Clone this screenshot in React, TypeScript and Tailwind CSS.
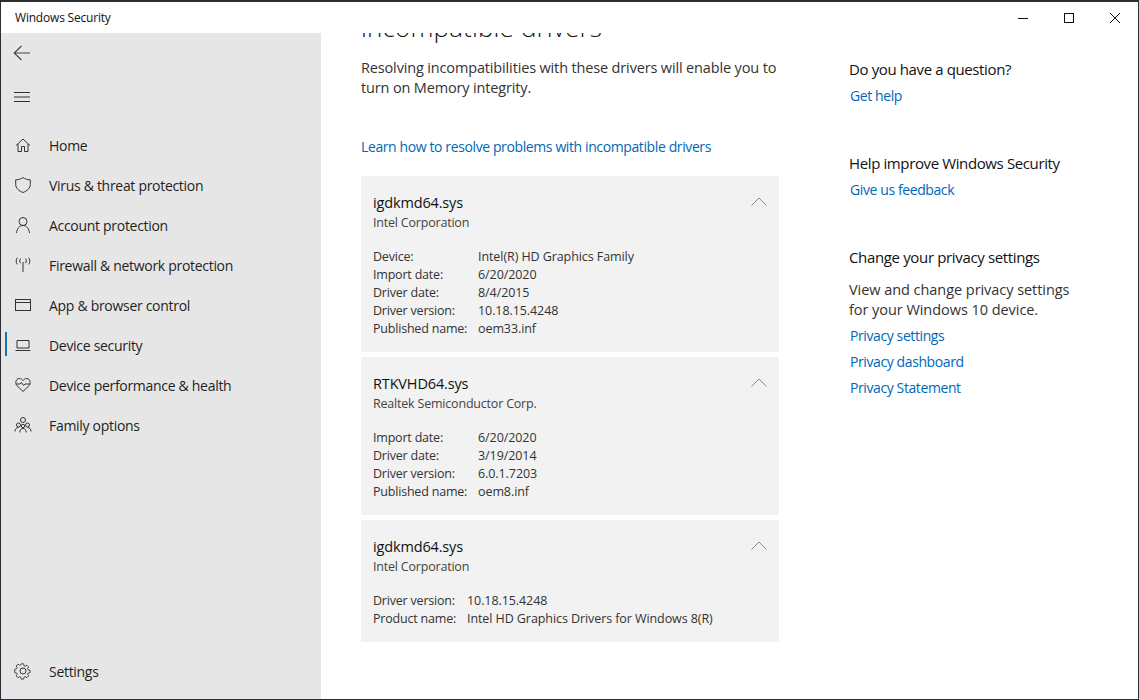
import React from "react";

const font = { fontFamily: '"Open Sans", "Noto Sans", sans-serif' };

const S = (p: { children: React.ReactNode; w?: number; h?: number; vb?: string }) => (
  <svg width={p.w ?? 18} height={p.h ?? 18} viewBox={p.vb ?? "0 0 18 18"} fill="none" stroke="#333" strokeWidth="1" className="shrink-0">
    {p.children}
  </svg>
);

const icons: Record<string, React.ReactNode> = {
  home: <S><path d="M2 9.500 9 3l7 6.500M4 8v7.500h3.500V10.500h3v5H14V8" /></S>,
  shield: <S><path d="M9 1.500c2 1.600 4.700 2.300 7.300 2.300V8.500c0 3.700-3.200 6.500-7.300 8-4.100-1.500-7.300-4.300-7.300-8V3.800C4.300 3.800 7 3.100 9 1.500z" /></S>,
  user: <S><circle cx="9" cy="5.500" r="4" /><path d="M2.500 17c.5-4.500 3-7.500 6.500-7.500s6 3 6.500 7.500" /></S>,
  net: <S><path d="M9 6v10M6.500 2.500c-1 1.500-1 3.200 0 4.700M11.500 2.500c1 1.500 1 3.200 0 4.700M3.300 1.700c-1.500 2-1.500 4.700 0 6.700M14.700 1.700c1.500 2 1.500 4.700 0 6.700" /></S>,
  app: <S w={18} h={14} vb="0 0 18 14"><rect x="1.500" y="1.500" width="15" height="11" /><path d="M1.500 4.500h15" /></S>,
  laptop: <S><path d="M3 4.500h12v7.500H3zM1.500 14.500h15" /></S>,
  heart: <S><path d="M9 15.500 2.800 9.500C.8 7.300 2 2.500 5.200 2.500 7 2.500 8.200 3.500 9 4.500 9.800 3.500 11 2.500 12.800 2.500 16 2.500 17.200 7.300 15.200 9.500z" /><path d="M2 8h4l1.500-1.500 2 3L11 8h5" /></S>,
  family: <S><circle cx="9" cy="4" r="2.500" /><circle cx="4.500" cy="9" r="2" /><circle cx="13.500" cy="9" r="2" /><circle cx="9" cy="10" r="1.700" /><path d="M1 15.500c0-2.500 1.500-4 3.500-4M17 15.500c0-2.500-1.500-4-3.500-4M5.800 16.500c0-2.500 1.200-4 3.200-4s3.200 1.500 3.200 4" /></S>,
  gear: <S><circle cx="9" cy="9" r="3" /><path d="M7.600 1.500h2.800l.4 2.200 1.400.6 1.900-1.200 2 2-1.200 1.900.6 1.400 2.200.4v2.800l-2.200.4-.6 1.400 1.200 1.900-2 2-1.900-1.200-1.400.6-.4 2.200H7.600l-.4-2.200-1.400-.6-1.900 1.200-2-2 1.200-1.900-.6-1.400-2.200-.4V7.600l2.200-.4.6-1.400-1.200-1.900 2-2 1.900 1.200 1.400-.6z" transform="translate(.5 .5) scale(.88)" /></S>,
};

const nav: [string, string, boolean?][] = [
  ["home", "Home"],
  ["shield", "Virus & threat protection"],
  ["user", "Account protection"],
  ["net", "Firewall & network protection"],
  ["app", "App & browser control"],
  ["laptop", "Device security", true],
  ["heart", "Device performance & health"],
  ["family", "Family options"],
];

function NavRow({ icon, label, active }: { icon: string; label: string; active?: boolean }) {
  return (
    <div className="relative flex h-10 items-center pl-[13px] text-[#1f1f1f]">
      {active && <div className="absolute left-[4px] top-[7px] h-[24px] w-[2px] bg-[#1b74b0]" />}
      <span className="flex w-[35px] justify-start">{icons[icon]}</span>
      <span>{label}</span>
    </div>
  );
}

function Card({ title, vendor, rows, labelW, h }: { title: string; vendor: string; rows: [string, string][]; labelW: string; h: string }) {
  return (
    <div className={`relative ${h} bg-[#f2f2f2] px-3 pt-[16px]`}>
      <svg width="16" height="9" viewBox="0 0 16 9" fill="none" stroke="#8a8a8a" className="absolute right-[12px] top-[21px]">
        <path d="M.5 8.500 8 1l7.500 7.500" />
      </svg>
      <div className="text-[14.5px] leading-[22px] tracking-[-0.15px] text-[#111]">{title}</div>
      <div className="text-[12.5px] leading-[18px] tracking-[-0.2px] text-[#444]">{vendor}</div>
      <div className="mt-[16px] text-[12.5px] leading-[18px] text-[#333]">
        {rows.map(([a, b]) => (
          <div key={a} className="flex">
            <span className={`${labelW} tracking-[-0.2px]`}>{a}</span>
            <span className="tracking-[-0.08px]">{b}</span>
          </div>
        ))}
      </div>
    </div>
  );
}

const Link = ({ children }: { children: React.ReactNode }) => (
  <div className="text-[14px] leading-[26px] tracking-[-0.4px] text-[#0067b8]">{children}</div>
);

export default function App() {
  return (
    <div style={font} className="flex h-[700px] w-[1139px] flex-col overflow-hidden border border-t-2 border-[#2b2f33] bg-white">
      <div className="flex h-[31px] shrink-0 items-center justify-between">
        <span className="pl-[14px] text-[12px] tracking-[-0.2px] text-[#111]">Windows Security</span>
        <div className="flex items-center">
          <svg width="46" height="12" viewBox="0 0 46 12" stroke="#111"><path d="M18 6.500h10" /></svg>
          <svg width="46" height="12" viewBox="0 0 46 12" fill="none" stroke="#111"><rect x="18.500" y="1.500" width="9" height="9" /></svg>
          <svg width="46" height="12" viewBox="0 0 46 12" fill="none" stroke="#111"><path d="M18 1l10 10M28 1 18 11" /></svg>
        </div>
      </div>
      <div className="flex min-h-0 flex-1">
        <aside className="flex w-[320px] shrink-0 flex-col bg-[#e6e6e6] text-[14px] tracking-[-0.3px]">
          <div className="flex h-[40px] items-center pl-[12px]">
            <svg width="18" height="16" viewBox="0 0 18 16" fill="none" stroke="#444" strokeWidth="1.100"><path d="M8.500 1 1.200 8l7.300 7M1.200 8H17" /></svg>
          </div>
          <div className="flex h-[48px] items-center pl-[12px]">
            <svg width="18" height="12" viewBox="0 0 18 12" fill="none" stroke="#333"><path d="M1 1.500h16M1 6h16M1 10.500h16" /></svg>
          </div>
          <div className="h-[4px]" />
          {nav.map(([i, l, a]) => (
            <NavRow key={l} icon={i} label={l} active={a} />
          ))}
          <div className="mt-auto mb-[8px]">
            <NavRow icon="gear" label="Settings" />
          </div>
        </aside>
        <main className="flex min-h-0 flex-1">
          <section className="w-[418px] ml-[40px] shrink-0 overflow-hidden">
            <div className="-mt-[20px] text-[26px] font-light leading-[28px] tracking-[0.15px] text-[#111]">incompatible drivers</div>
            <p className="mt-[17px] text-[14.5px] leading-[20px] tracking-[-0.15px] text-[#333]">
              Resolving incompatibilities with these drivers will enable you to
              <br />
              turn on Memory integrity.
            </p>
            <div className="mt-[39px] text-[14px] leading-[20px] tracking-[-0.39px] text-[#0067b8]">Learn how to resolve problems with incompatible drivers</div>
            <div className="mt-[19px] flex flex-col gap-[5px]">
              <Card h="h-[176px]" labelW="w-[105px]" title="igdkmd64.sys" vendor="Intel Corporation" rows={[["Device:", "Intel(R) HD Graphics Family"], ["Import date:", "6/20/2020"], ["Driver date:", "8/4/2015"], ["Driver version:", "10.18.15.4248"], ["Published name:", "oem33.inf"]]} />
              <Card h="h-[158px]" labelW="w-[105px]" title="RTKVHD64.sys" vendor="Realtek Semiconductor Corp." rows={[["Import date:", "6/20/2020"], ["Driver date:", "3/19/2014"], ["Driver version:", "6.0.1.7203"], ["Published name:", "oem8.inf"]]} />
              <Card h="h-[122px]" labelW="w-[94px]" title="igdkmd64.sys" vendor="Intel Corporation" rows={[["Driver version:", "10.18.15.4248"], ["Product name:", "Intel HD Graphics Drivers for Windows 8(R)"]]} />
            </div>
          </section>
          <section className="ml-[70px] w-[260px] pt-[24px]">
            <div className="text-[15px] leading-[24px] tracking-[-0.38px] text-[#111]">Do you have a question?</div>
            <div className="ml-px mt-[2px]"><Link>Get help</Link></div>
            <div className="mt-[42px] text-[15px] leading-[24px] tracking-[-0.38px] text-[#111]">Help improve Windows Security</div>
            <div className="ml-px mt-[2px]"><Link>Give us feedback</Link></div>
            <div className="mt-[42px] text-[15px] leading-[24px] tracking-[-0.35px] text-[#111]">Change your privacy settings</div>
            <p className="mt-[11px] text-[14.5px] leading-[20px] tracking-[-0.05px] text-[#333]">
              View and change privacy settings
              <br />
              for your Windows 10 device.
            </p>
            <div className="ml-px mt-[3px]">
              <Link>Privacy settings</Link>
              <Link>Privacy dashboard</Link>
              <Link>Privacy Statement</Link>
            </div>
          </section>
        </main>
      </div>
    </div>
  );
}
